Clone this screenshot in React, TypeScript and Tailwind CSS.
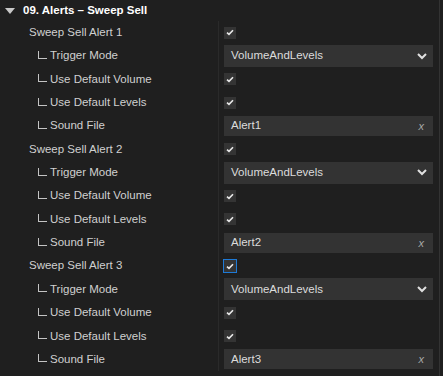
import React from "react";

type Row =
  | { kind: "check"; label: string; child?: boolean; focus?: boolean }
  | { kind: "select"; label: string; value: string }
  | { kind: "file"; label: string; value: string };

const makeAlert = (n: number): Row[] => [
  { kind: "check", label: `Sweep Sell Alert ${n}`, focus: n === 3 },
  { kind: "select", label: "Trigger Mode", value: "VolumeAndLevels" },
  { kind: "check", label: "Use Default Volume", child: true },
  { kind: "check", label: "Use Default Levels", child: true },
  { kind: "file", label: "Sound File", value: `Alert${n}` },
];

const rows: Row[] = [...makeAlert(1), ...makeAlert(2), ...makeAlert(3)];

const CheckBox: React.FC<{ focus?: boolean }> = ({ focus }) => (
  <div
    className={`w-3 h-3 flex items-center justify-center bg-[#343434] ${
      focus ? "outline outline-1 outline-[#1e7ad6]" : ""
    }`}
  >
    <svg width="8" height="7" viewBox="0 0 8 7" fill="none">
      <path d="M1 3.6 L3 5.4 L7 1.2" stroke="#e8e8e8" strokeWidth="1.6" />
    </svg>
  </div>
);

const App: React.FC = () => {
  return (
    <div
      className="w-[443px] h-[376px] bg-[#1f1f1f] text-[#d4d4d4] overflow-hidden flex"
      style={{ fontFamily: '"Liberation Sans", Arial, sans-serif' }}
    >
      <div className="w-[440px] flex flex-col border-r border-[#333333]">
        {/* category header */}
        <div className="h-[21px] flex items-center pl-[5px] gap-[8px] shrink-0">
          <svg width="10" height="6" viewBox="0 0 10 6" className="mt-[1px]">
            <path d="M0 0 H10 L5 6 Z" fill="#c8c8c8" />
          </svg>
          <span className="text-[11.5px] font-bold text-white">09. Alerts – Sweep Sell</span>
        </div>

        {rows.map((row, i) => {
          const child = row.kind !== "check" || row.child;
          return (
            <div key={i} className="h-[23.35px] flex items-center shrink-0">
              <div className="w-[219px] h-full flex items-center border-r border-[#2a2a2a] text-[11.5px] text-[#d0d0d0] whitespace-nowrap">
                {child ? (
                  <span className="pl-[38px] flex items-center">
                    {/* tree connector */}
                    <span className="inline-block w-[9px] h-[8px] border-l border-b border-[#c4c4c4] mb-[2px] mr-[3px]" />
                    {row.label}
                  </span>
                ) : (
                  <span className="pl-[29px]">{row.label}</span>
                )}
              </div>
              <div className="flex-1 h-full flex items-center pl-[5px] pr-[6px]">
                {row.kind === "check" && <CheckBox focus={row.focus} />}
                {row.kind === "select" && (
                  <div className="w-full h-[22px] bg-[#333333] flex items-center justify-between pl-[7px] pr-[6px] text-[11.5px] text-[#dcdcdc]">
                    <span>{row.value}</span>
                    <svg width="10" height="7" viewBox="0 0 10 7" fill="none">
                      <path d="M1 1 L5 5 L9 1" stroke="#e0e0e0" strokeWidth="2" />
                    </svg>
                  </div>
                )}
                {row.kind === "file" && (
                  <div className="w-full h-[20px] bg-[#333333] flex items-center justify-between pl-[7px] pr-[9px] text-[11.5px] text-[#dcdcdc]">
                    <span>{row.value}</span>
                    <span className="italic text-[#a8a8a8] text-[11px]">x</span>
                  </div>
                )}
              </div>
            </div>
          );
        })}
      </div>
    </div>
  );
};

export default App;
